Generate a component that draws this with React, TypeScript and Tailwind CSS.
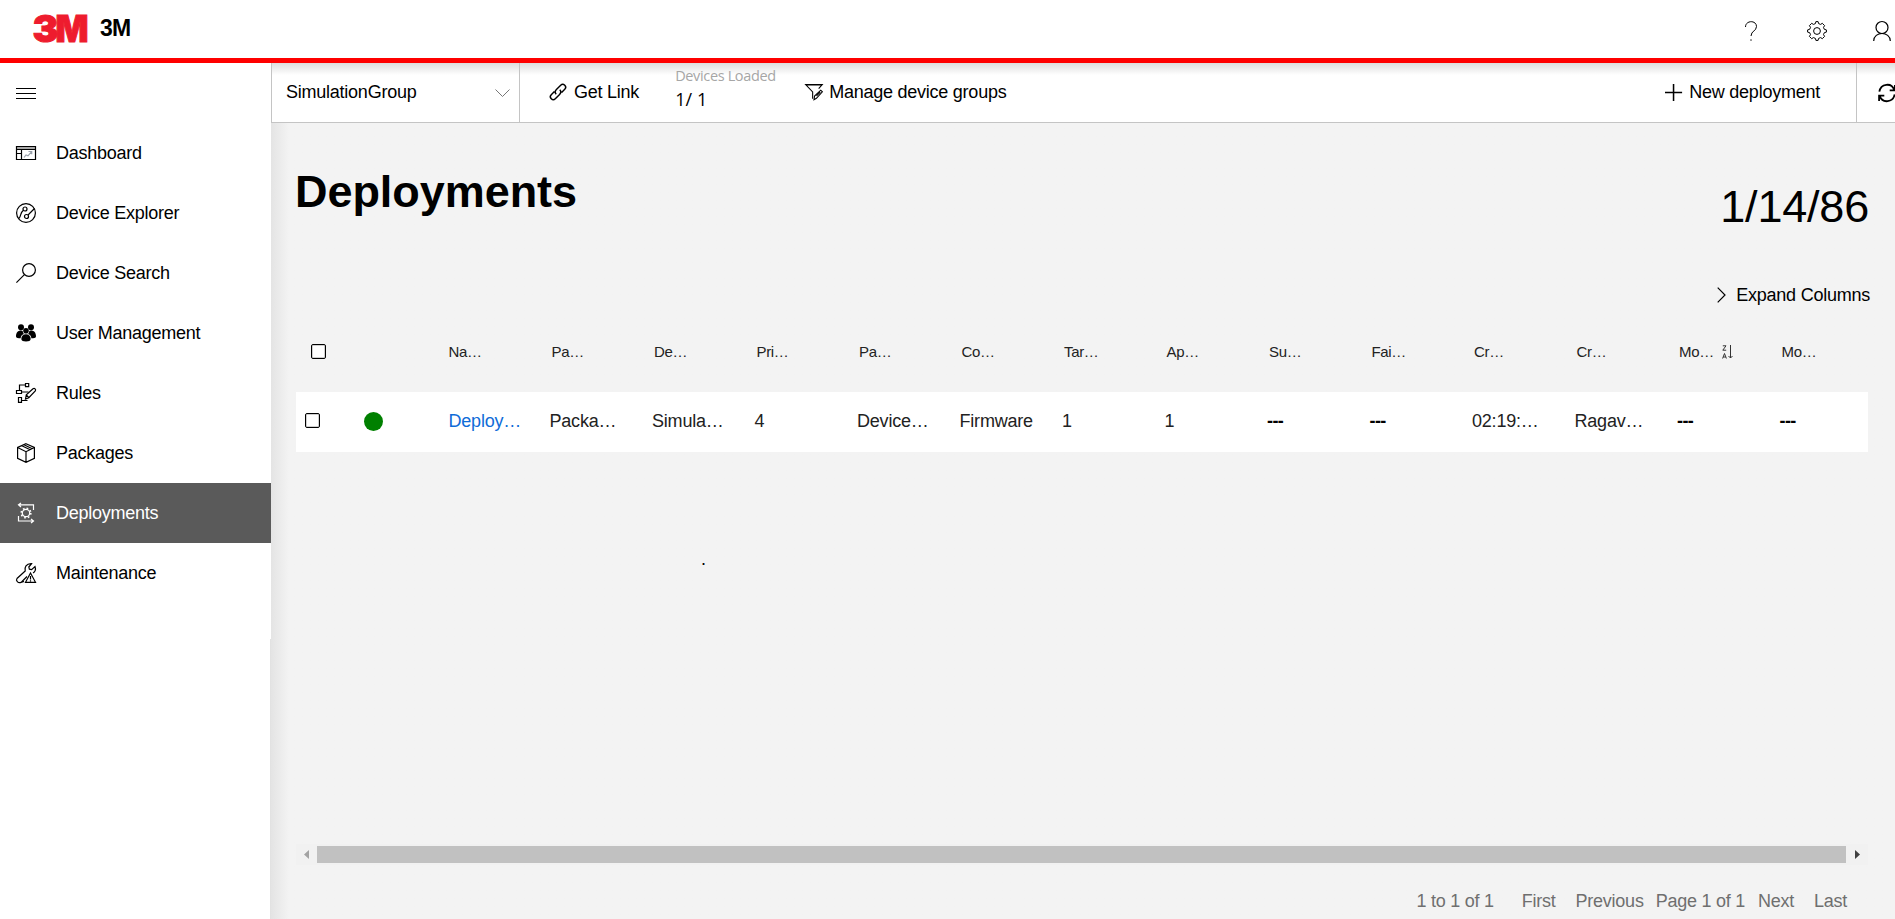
import React from "react";

type IconProps = { children: React.ReactNode; size?: string; sw?: number };

function Icon({ children, size = "h-5 w-5", sw = 1.2 }: IconProps) {
  return (
    <svg viewBox="0 0 20 20" className={`${size} shrink-0 overflow-visible`} fill="none" stroke="currentColor" strokeWidth={sw}>
      {children}
    </svg>
  );
}

const gear =
  "M8.4 2.6 L8.9 0.6 H11.1 L11.6 2.6 L13.6 3.4 L15.3 2.3 L17.6 4.6 L16.5 6.4 L17.3 8.3 L19.4 8.9 V11.1 L17.3 11.7 L16.5 13.6 L17.6 15.4 L15.3 17.7 L13.6 16.6 L11.6 17.4 L11.1 19.4 H8.9 L8.4 17.4 L6.4 16.6 L4.7 17.7 L2.4 15.4 L3.5 13.6 L2.7 11.7 L0.6 11.1 V8.9 L2.7 8.3 L3.5 6.4 L2.4 4.6 L4.7 2.3 L6.4 3.4 Z";

const navItems: { label: string; icon: React.ReactNode }[] = [
  {
    label: "Dashboard",
    icon: (
      <Icon>
        <path d="M1 5h18" stroke="#a8a8a8" strokeWidth="2" />
        <path d="M.5 3.500h19v13H.5z" />
        <path d="M.5 6.500h19M5.500 6.500v10M.5 10.500h5" />
        <path d="M8 14.500l2-2.500 2 .8 3.500-4M12.500 8.500h3.200v2.800" stroke="#98a0aa" />
      </Icon>
    ),
  },
  {
    label: "Device Explorer",
    icon: (
      <Icon>
        <circle cx="10" cy="10" r="9.400" />
        <circle cx="9" cy="6" r="2" />
        <circle cx="10.500" cy="13.500" r="2" />
        <path d="M7.400 7.200C4 10 5.500 12 3 15.500M12 12L18.500 5.500" />
      </Icon>
    ),
  },
  {
    label: "Device Search",
    icon: (
      <Icon>
        <circle cx="13" cy="7" r="6.400" />
        <path d="M8.400 11.600L.4 19.600" />
      </Icon>
    ),
  },
  {
    label: "User Management",
    icon: (
      <Icon>
        <g fill="currentColor" stroke="none">
          <circle cx="5" cy="4.200" r="3" />
          <circle cx="15" cy="4.200" r="3" />
          <path d="M0 13.500C0 9.500 2 7.500 5 7.500c.8 0 1.300.2 1.700.5C6.800 9.500 7.500 10.500 8 11c-2.500.8-3.300 2.500-3.300 4.300C2.500 15.300 0 15 0 13.500z" />
          <path d="M20 13.500c0-4-2-6-5-6-.8 0-1.300.2-1.700.5-.1 1.500-.8 2.500-1.300 3 2.500.8 3.300 2.500 3.300 4.300 2.200 0 4.700-.3 4.700-1.800z" />
          <circle cx="10" cy="7.800" r="2.800" />
          <path d="M5.300 16c0-3.200 2-4.800 4.700-4.800s4.700 1.600 4.700 4.800c0 1.700-2 2.500-4.700 2.500S5.300 17.700 5.300 16z" />
        </g>
      </Icon>
    ),
  },
  {
    label: "Rules",
    icon: (
      <Icon>
        <path d="M9.500.5h3.200v3.200H9.500zM.5 7.500h5v3h-5zM2.500 14.500h3v4.800h-3z" />
        <path d="M9.500 2H3.500v5.500M5.500 9h7M5.500 17.500h6" />
        <path d="M9.500 16l.8-4.200L17 5.700c1.500-1 3.300.6 2.300 2.200l-6.500 6.800zM10.300 11.800l2.500 2.900" />
      </Icon>
    ),
  },
  {
    label: "Packages",
    icon: (
      <Icon>
        <path d="M10 .7l8.400 3.800v10.800L10 19.400l-8.400-4.100V4.500zM1.600 4.500L10 8.700l8.400-4.200M10 8.700v10.700M5.800 2.800l8.400 4M8 1.700l8.300 4" />
      </Icon>
    ),
  },
  {
    label: "Deployments",
    icon: (
      <Icon>
        <path d="M17.500 7V1.800H2.500M5 0L2.500 1.800 5 4M2.500 13v5h15M15 16l2.500 2-2.500 2" />
        <circle cx="10" cy="10" r="3.700" />
        <circle cx="10" cy="10" r="4.800" strokeDasharray="1.700 2.070" strokeWidth="1.600" />
      </Icon>
    ),
  },
  {
    label: "Maintenance",
    icon: (
      <Icon>
        <path d="M8 18.500l-3 .9C2 20.500-.5 17.500 1 15.500L9.200 8C8.400 4.500 10 .5 15.500.7L12.800 4l.6 2.200 2.200.5L19 3.500c1 3-.2 5.500-2 6.500M5.500 19L11 13.500" />
        <path d="M14.500 10l5 9.300h-10zM14.500 13v3.500M14.500 17.300v1.200" />
      </Icon>
    ),
  },
];

const headers = ["Na…", "Pa…", "De…", "Pri…", "Pa…", "Co…", "Tar…", "Ap…", "Su…", "Fai…", "Cr…", "Cr…", "Mo…", "Mo…"];
const cells = ["Deploy…", "Packa…", "Simula…", "4", "Device…", "Firmware", "1", "1", "---", "---", "02:19:…", "Ragav…", "---", "---"];

function Box() {
  return <span className="block h-[15px] w-[15px] shrink-0 rounded-[2px] border border-black bg-white shadow-[inset_0_0_0_1px_#cfcfcf]" />;
}

function Header() {
  return (
    <header className="flex h-[63px] shrink-0 items-center border-b-[5px] border-[#ff0000] bg-white">
      <svg viewBox="0 0 54 29" className="mb-px ml-[33px] h-[29px] w-[54px] overflow-visible" aria-label="3M" fontFamily="Inter" fontWeight="900" fontSize="37.500" fill="#ee1c2e" stroke="#ee1c2e" strokeWidth="1">
        <text x="-0.500" y="28" textLength="26" lengthAdjust="spacingAndGlyphs">
          3
        </text>
        <text x="22.500" y="28" textLength="33" lengthAdjust="spacingAndGlyphs">
          M
        </text>
      </svg>
      <span className="mb-[2px] ml-[13px] text-[23px] leading-none font-bold tracking-[-0.8px]">3M</span>
      <div className="ml-auto flex items-center pt-[4px]">
        <Icon sw={1}>
          <path d="M4.500 6C4.500-1 15.500-1 15.500 5.500c0 4.500-5.500 4.500-5.500 9.500M10 18.300v1.500" />
        </Icon>
        <span className="w-[46px]" />
        <Icon sw={1}>
          <path d={gear} strokeLinejoin="round" />
          <circle cx="10" cy="10" r="3.400" />
        </Icon>
        <span className="w-[45px]" />
        <Icon sw={1.2}>
          <circle cx="10" cy="6.500" r="6" />
          <path d="M1.700 20c0-10 16.600-10 16.600 0" />
        </Icon>
        <span className="w-[3px]" />
      </div>
    </header>
  );
}

function Sidebar() {
  return (
    <aside className="flex w-[271px] shrink-0 bg-white">
      <nav className="flex w-[271px] shrink-0 flex-col">
        <div className="flex h-[60px] items-center pl-4">
          <Icon sw={1}>
            <path d="M0 5.500h20M0 10.500h20M0 15.500h20" />
          </Icon>
        </div>
        {navItems.map((n) => (
          <a key={n.label} className={`flex h-[60px] items-center pl-4 ${n.label === "Deployments" ? "bg-[#5a5a5a] text-white" : ""}`}>
            {n.icon}
            <span className="ml-5 text-[18px] tracking-[-0.25px]">{n.label}</span>
          </a>
        ))}
        <div className="mt-[36px] w-px flex-1 self-end bg-[#e2e2e2]" />
      </nav>
      <div className="mt-[357px] h-[219px] w-px shrink-0 bg-white" />
    </aside>
  );
}

function Toolbar() {
  return (
    <div className="flex h-[60px] shrink-0 items-stretch border-b border-l border-[#c4c4c4] bg-white bg-linear-to-b from-[#dedede] to-white to-[12px] text-[18px] tracking-[-0.24px]">
      <div className="flex w-[248px] items-center justify-between border-r border-[#c4c4c4] pr-[9px] pb-px pl-[14px]">
        <span>SimulationGroup</span>
        <svg viewBox="0 0 15 8" className="mt-[2px] h-2 w-[15px]" fill="none" stroke="#777">
          <path d="M.5.500l7 7 7-7" />
        </svg>
      </div>
      <div className="flex items-center pb-px pl-[29px]">
        <Icon size="h-[18px] w-[18px]" sw={1.6}>
          <path d="M8 12.500C6 10.500 7 8.500 8.500 7l4.500-4.500c3-3 7.500 1.500 4.500 4.500l-3.500 3.500M12 7.500c2 2 1 4-.5 5.500L7 17.500c-3 3-7.500-1.500-4.500-4.500L6 9.500" />
        </Icon>
        <span className="ml-[7px]">Get Link</span>
      </div>
      <div className="ml-[36px] flex w-[130px] flex-col pt-[3px] font-['Open_Sans',sans-serif]">
        <span className="text-[14.500px] leading-[20px] tracking-[-0.35px] whitespace-nowrap text-[#a6a6a6]">Devices Loaded</span>
        <span className="text-[18px] leading-[27px] tracking-[0.100px]">1/ 1</span>
      </div>
      <div className="flex items-center pb-px">
        <Icon size="h-[18px] w-[18px]" sw={1.2}>
          <path d="M8.500 17.500V10L.7 1.700h18.500l-4 4.500M.7 2.200h18.500" />
          <path d="M10 18.500l.6-4L17.500 8l1.800 1.800-6.600 7.200zM12.800 14.300L17 10.200" />
        </Icon>
        <span className="ml-[6px]">Manage device groups</span>
      </div>
      <div className="ml-auto flex items-center pr-[36px] pb-px">
        <Icon size="h-[18px] w-[18px]" sw={1.700}>
          <path d="M0 10.500h19M9.500 1v19" />
        </Icon>
        <span className="ml-[6px]">New deployment</span>
      </div>
      <div className="flex w-[39px] items-center overflow-hidden border-l border-[#c4c4c4] pl-[21px]">
        <Icon size="h-[18px] w-[18px]" sw={2}>
          <path d="M1.500 8.500C3-.5 15-2 18 6.500M18.800 1v6H13M18.500 11.500C17 20.500 5 22 2 13.500M1.200 19v-6H7" />
        </Icon>
      </div>
    </div>
  );
}

function Grid() {
  return (
    <div className="mr-[27px] flex flex-col">
      <div className="flex h-[80px] items-center text-[15px] tracking-[-0.35px] text-[#222]">
        <div className="flex w-[152px] shrink-0 pb-px pl-[15px]">
          <Box />
        </div>
        {headers.map((h, i) => (
          <div key={i} className="flex w-[102.500px] shrink-0 items-center">
            <span className={i === 0 ? "pl-[0.500px]" : "pl-[1px]"}>{h}</span>
            {i === 12 && (
              <svg viewBox="0 0 11 14" className="ml-[8px] h-[14px] w-[11px]" fill="none" stroke="#333">
                <path d="M.8.800h3.200L.8 5.200h3.400M.6 13.500l1.900-5 1.900 5M1.200 12h2.600M8.500 0v13M6.500 11l2 2 2-2" />
              </svg>
            )}
          </div>
        ))}
      </div>
      <div className="flex h-[60px] items-center bg-white text-[18px] tracking-[-0.2px] text-[#222]">
        <div className="flex w-[152px] shrink-0 items-center pb-px pl-[9px]">
          <span className="mb-[3px]">
            <Box />
          </span>
          <span className="ml-[44px] h-[19px] w-[19px] rounded-full bg-[#008000]" />
        </div>
        {cells.map((c, i) => (
          <div
            key={i}
            className={`w-[102.500px] shrink-0 pb-[2px] ${i === 0 ? "pl-[0.500px] text-[#0f6cd8]" : "-ml-[1px] mr-[1px]"} ${c === "---" ? "font-bold tracking-[-0.600px] text-black" : ""}`}
          >
            {c}
          </div>
        ))}
      </div>
    </div>
  );
}

export default function App() {
  return (
    <div className="flex h-[919px] w-[1895px] flex-col overflow-hidden bg-[#f3f3f3] font-['Liberation_Sans',Arial,sans-serif] text-black">
      <Header />
      <div className="flex min-h-0 flex-1">
        <Sidebar />
        <main className="flex min-w-0 flex-1 flex-col">
          <Toolbar />
          <div className="flex flex-1 flex-col bg-linear-to-r from-[#e4e4e4] to-[#f3f3f3] to-[18px] pl-[25px]">
            <div className="flex h-[157px] items-start justify-between pr-[26px] text-[45px] leading-[52px]">
              <h1 className="-ml-px pt-[43px] font-bold tracking-[-0.05px]">Deployments</h1>
              <span className="pt-[58px] tracking-[-0.200px]">1/14/86</span>
            </div>
            <div className="mb-[2px] flex h-[30px] items-center justify-end pr-[25px] text-[18px] tracking-[-0.24px]">
              <svg viewBox="0 0 9 16" className="mr-[10px] h-4 w-[9px]" fill="none" stroke="black" strokeWidth="1.200">
                <path d="M.7.700L8 8l-7.300 7.300" />
              </svg>
              Expand Columns
            </div>
            <Grid />
            <div className="pt-[97px] pl-[405px] text-[18px] leading-[20px]">.</div>
            <div className="mt-auto mr-[27px] flex h-[21px] items-center bg-[#f1f1f1]">
              <svg viewBox="0 0 21 21" className="h-[21px] w-[21px]">
                <path d="M8 10.500l5-4.500v9z" fill="#a3a3a3" />
              </svg>
              <span className="h-[17px] flex-1 bg-[#c1c1c1]" />
              <svg viewBox="0 0 21 21" className="h-[21px] w-[22px]">
                <path d="M13.500 10.500l-5-4.500v9z" fill="#404040" />
              </svg>
            </div>
            <div className="flex h-[54px] items-center justify-end pr-[48px] pt-[18px] text-[18px] tracking-[-0.25px] text-[#6f6f6f]">
              <span>1 to 1 of 1</span>
              <span className="ml-[28px]">First</span>
              <span className="ml-[20px]">Previous</span>
              <span className="ml-[12px]">Page 1 of 1</span>
              <span className="ml-[13px]">Next</span>
              <span className="ml-[20px]">Last</span>
            </div>
          </div>
        </main>
      </div>
    </div>
  );
}
